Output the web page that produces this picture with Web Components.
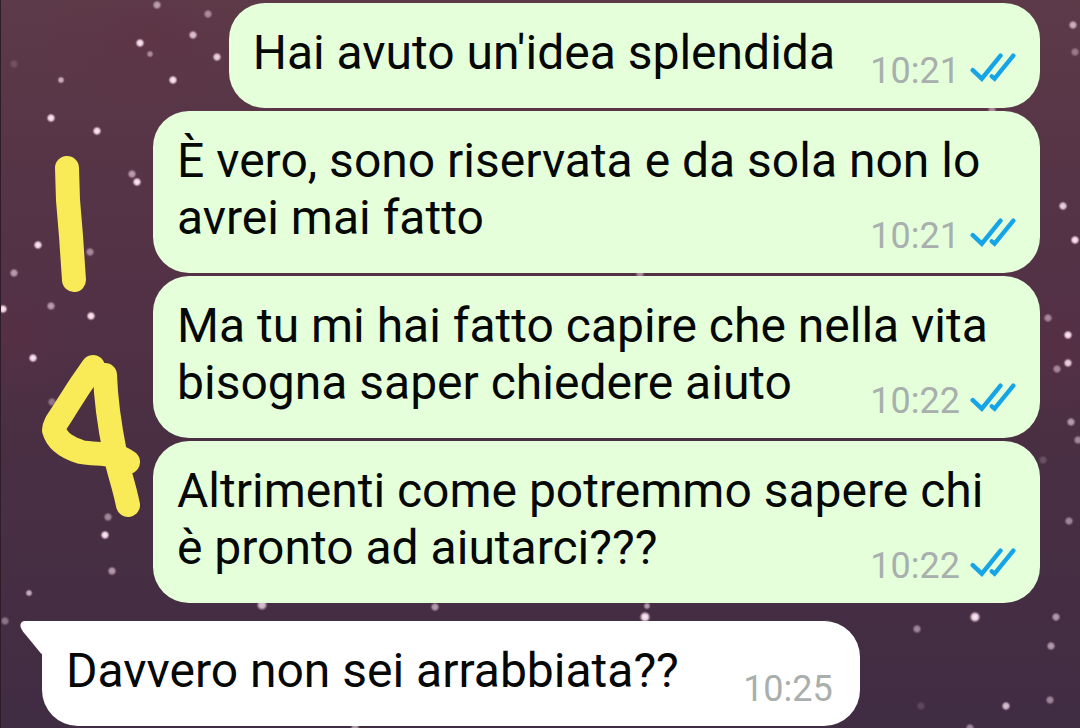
<!DOCTYPE html>
<html lang="it">
<head>
<meta charset="utf-8">
<meta name="viewport" content="width=device-width, initial-scale=1">
<title>Chat</title>
<style>
  html, body { margin: 0; min-height: 100%; background: #462e43; }
  body { font-family: Roboto, "Liberation Sans", sans-serif; color: #060806; }
</style>
</head>
<body>
<chat-thread>
  <starry-wallpaper slot="wallpaper"></starry-wallpaper>
  <chat-message direction="out" time="10:21">Hai avuto un'idea splendida</chat-message>
  <chat-message direction="out" time="10:21">È vero, sono riservata e da sola non lo avrei mai fatto</chat-message>
  <chat-message direction="out" time="10:22">Ma tu mi hai fatto capire che nella vita bisogna saper chiedere aiuto</chat-message>
  <chat-message direction="out" time="10:22">Altrimenti come potremmo sapere chi è pronto ad aiutarci???</chat-message>
  <chat-message direction="in" time="10:25">Davvero non sei arrabbiata??</chat-message>
  <hand-drawing slot="overlay"></hand-drawing>
</chat-thread>

<script>
class ChatThread extends HTMLElement {
  constructor() {
    super();
    this.attachShadow({ mode: 'open' }).innerHTML = `
      <style>
        :host { display: block; position: relative; overflow: hidden; min-height: 100vh; }
        main { position: relative; display: flex; flex-direction: column; gap: 3px; padding: 3px 40px 2px 42px; }
      </style>
      <slot name="wallpaper"></slot>
      <main><slot></slot></main>
      <slot name="overlay"></slot>`;
  }
}

class StarryWallpaper extends HTMLElement {
  constructor() {
    super();
    // x, y, radius, opacity
    const stars = [
      [157,5,3,.6],[208,14,3,.5],[193,35,3,.8],[140,43,3,1],[150,54,2,.5],[217,57,3,.9],[173,80,3,1],[61,80,2,.7],
      [51,118,3,1],[97,131,3,1],[132,174,3,.6],[137,182,3,1],[38,245,3,1],[90,252,3,.5],[14,273,3,.6],[14,64,3,.15],
      [3,309,3,1],[51,306,3,.6],[91,316,3,1],[33,358,3,1],[52,402,3,.4],[108,517,3,.5],[105,535,3,1],[112,571,3,.6],
      [29,593,2,.7],[5,621,3,.4],[1073,25,3,.7],[1075,52,3,.4],[992,110,3,.5],[1063,206,3,.9],[1075,240,3,1],
      [1048,318,3,.5],[1068,335,3,1],[1068,363,3,.9],[1057,369,3,.5],[1071,422,3,.6],[1078,440,3,.5],[1043,460,3,.2],
      [1069,521,3,.5],[975,617,4,1],[917,629,3,.5],[1056,617,3,.6],[1051,646,3,.6],[1006,706,3,.8],[1050,700,3,.5],
      [921,706,3,.15],[970,728,3,.5],[262,605,4,.8],[435,607,3,.6],[647,606,2,.6],[645,617,4,1],[355,727,3,.6],
      [827,624,3,.2],[640,274,3,.5]
    ];
    this.attachShadow({ mode: 'open' }).innerHTML = `
      <style>
        :host { display: block; position: absolute; inset: 0; }
        svg { display: block; width: 100%; height: 100%; }
      </style>
      <svg viewBox="0 0 1080 728" preserveAspectRatio="xMidYMid slice" aria-hidden="true">
        <defs>
          <linearGradient id="sky" x1="0" y1="0" x2="0" y2="1">
            <stop offset="0" stop-color="#5d3a48"/><stop offset=".2" stop-color="#573547"/>
            <stop offset=".42" stop-color="#523146"/><stop offset=".6" stop-color="#4a2f43"/>
            <stop offset=".82" stop-color="#452e43"/><stop offset="1" stop-color="#402c43"/>
          </linearGradient>
          <radialGradient id="red"><stop offset="0" stop-color="#622f42" stop-opacity=".3"/><stop offset="1" stop-color="#622f42" stop-opacity="0"/></radialGradient>
          <radialGradient id="star"><stop offset="0" stop-color="#fff0fb"/><stop offset=".5" stop-color="#e9cbdc"/><stop offset="1" stop-color="#b18aa0" stop-opacity="0"/></radialGradient>
        </defs>
        <rect width="1080" height="728" fill="url(#sky)"/>
        <ellipse cx="150" cy="40" rx="110" ry="65" fill="url(#red)"/>
        <ellipse cx="1060" cy="350" rx="60" ry="75" fill="url(#red)"/>
        <ellipse cx="10" cy="340" rx="70" ry="60" fill="url(#red)"/>
        ${stars.map(([x, y, r, o]) => `<circle cx="${x}" cy="${y}" r="${r + 2}" opacity="${o}" fill="url(#star)"/>`).join('')}
        <rect width="1" height="728" fill="#2e1d29"/>
      </svg>`;
  }
}

class ReadTicks extends HTMLElement {
  constructor() {
    super();
    this.attachShadow({ mode: 'open' }).innerHTML = `
      <style>
        :host { display: block; width: 46px; padding-bottom: 6px; }
        svg { display: block; width: 46px; height: 30px; }
      </style>
      <svg viewBox="0 0 46 30" fill="none" stroke="#15a5e6" stroke-width="4.4" stroke-linecap="round" role="img" aria-label="Letto">
        <path d="M2.7 17.2 11.8 25.7 30.5 2.7"/><path d="M21.8 23.3 24.6 25.7 43.3 2.7"/>
      </svg>`;
  }
}

class ChatMessage extends HTMLElement {
  constructor() {
    super();
    this.attachShadow({ mode: 'open' });
  }
  connectedCallback() {
    const out = this.getAttribute('direction') === 'out';
    const time = this.getAttribute('time');
    this.shadowRoot.innerHTML = `
      <style>
        :host { display: flex; }
        :host([direction="out"]) { justify-content: flex-end; margin-left: 111px; --fill: #e5ffdb; --end: 24px; --reserve: 181px; }
        :host([direction="in"]) { margin-top: 15px; --fill: #fff; --end: 27px; --reserve: 157px; }
        article { position: relative; display: grid; background: var(--fill); border-radius: 36px; }
        :host([direction="in"]) article { border-top-left-radius: 0; }
        p, footer { grid-area: 1 / 1; }
        p { margin: 0; padding: 21px 24px 27px; font-size: 48px; line-height: 57px; }
        /* keeps the last line clear of the time */
        p::after { content: ""; display: inline-block; width: var(--reserve); height: 1px; }
        footer { place-self: end; display: flex; align-items: center; gap: 10px; padding: 0 var(--end) 16px 0; color: #a8afac; }
        time { font-size: 36px; line-height: 42px; }
        .tail { position: absolute; right: 100%; top: 0; width: 22px; height: 34px; fill: var(--fill); }
      </style>
      <article>
        ${out ? '' : '<svg class="tail" viewBox="0 0 22 34" aria-hidden="true"><path d="M22 0H5C1 0-1 4 1.5 8Q3 11 5 13L21 32.5 22 33Z"/></svg>'}
        <p><slot></slot></p>
        <footer><time datetime="${time}">${time}</time>${out ? '<read-ticks></read-ticks>' : ''}</footer>
      </article>`;
  }
}

class HandDrawing extends HTMLElement {
  constructor() {
    super();
    this.attachShadow({ mode: 'open' }).innerHTML = `
      <style>
        :host { display: block; position: absolute; left: 40px; top: 150px; width: 104px; height: 372px; pointer-events: none; }
        svg { display: block; width: 100%; height: 100%; }
      </style>
      <svg viewBox="40 150 104 372" fill="none" stroke="#f9eb58" stroke-width="24" stroke-linecap="round" stroke-linejoin="round" aria-hidden="true">
        <path d="M67 168L68 200L71 236 74 280"/>
        <path d="M93 367C80 385 75 393 67 406C60 418 54 424 54 430C57 441 68 448 81 452C98 455 114 452 128 462"/>
        <path d="M105 375C106 406 110 428 115 453C119 474 123 481 128 505"/>
      </svg>`;
  }
}

customElements.define('starry-wallpaper', StarryWallpaper);
customElements.define('read-ticks', ReadTicks);
customElements.define('chat-message', ChatMessage);
customElements.define('hand-drawing', HandDrawing);
customElements.define('chat-thread', ChatThread);
</script>
</body>
</html>
